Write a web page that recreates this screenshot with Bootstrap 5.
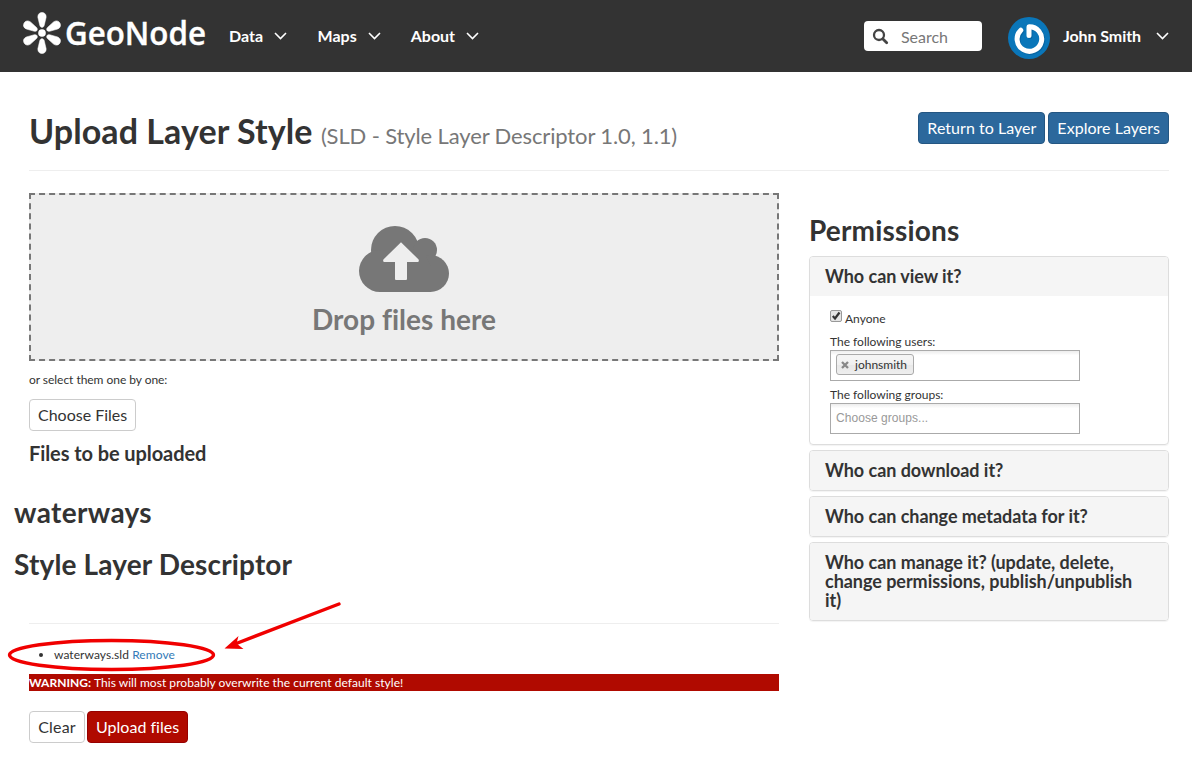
<!DOCTYPE html>
<html lang="en">
<head>
<meta charset="utf-8">
<meta name="viewport" content="width=device-width, initial-scale=1">
<title>Upload Layer Style - GeoNode</title>
<link href="https://cdn.jsdelivr.net/npm/bootstrap@5.3.0/dist/css/bootstrap.min.css" rel="stylesheet">
<style>
body{font-family:Lato,"Liberation Sans",sans-serif;font-size:12px;line-height:17px;color:#333;background:#fff;overflow:hidden}
h1,h2,h3,h4,h5{font-weight:700;color:#333;margin:0}
.topbar{background:#333;height:72px;padding:0 23px 0 22px}
.topbar .nav-link{color:#fff;font-weight:700;font-size:16px;line-height:20px;padding:0}
.menu-data{margin-left:17px}
.menu-maps{margin-left:30.5px}
.menu-about{margin-left:30px}
.chev{width:13px;height:8px;margin-left:11px;flex:none}
.user-name{letter-spacing:-.07px;margin-left:11px}
.search-box{width:118px;height:30px;background:#fff;border-radius:4px;padding-left:8px}
.search-box input{border:0;outline:0;background:none;width:74px;padding:1px 0 0;margin-left:12px;font-size:16px;line-height:20px}
.search-box input::placeholder{color:#777;opacity:1}
.page{width:1170px;margin-left:14px;padding:0 15px}
.page-head{height:99px;border-bottom:1px solid #eee;padding-top:40px}
.page-head h1{font-size:34px;line-height:40px;letter-spacing:.08px;margin-top:-1px}
.page-head h1 span{font-size:22px;font-weight:400;color:#777;letter-spacing:-.13px}
.btn{font-size:16px;line-height:22px;padding:4px 8px;border-radius:4px;white-space:nowrap}
.btn-blue,.btn-blue:hover{background:#2c689c;border-color:#245682;color:#fff;letter-spacing:.03px}
.btn-white{background:#fff;border-color:#ccc;color:#333}
.btn-red{background:#b00a00;border-color:#970000;color:#fff;letter-spacing:.02px}
.row.main{--bs-gutter-x:30px;padding-top:22px}
.dropzone{height:168px;background:#eee;border:2px dashed #777;padding-top:31px}
.dropzone h2{font-size:28px;line-height:34px;color:#777;margin-top:10px;letter-spacing:.03px}
.section-title{font-size:20px;line-height:24px;letter-spacing:-.08px}
.big{font-size:28px;line-height:34px;margin-left:-15px;letter-spacing:.15px}
.big.name{letter-spacing:.35px}
.perm-title{font-size:28px;line-height:34px;letter-spacing:.18px;margin-top:20px;margin-bottom:9px}
.rule{height:1px;background:#eee}
.file-list{padding-left:25px;margin:0;letter-spacing:.06px}
.file-list a{color:#337ab7;text-decoration:none}
.warning{background:#b00a00;color:#fff;height:17px;letter-spacing:.035px}
.marker{left:-22px;top:-54px;pointer-events:none}
.panel{border:1px solid #ddd;border-radius:4px;box-shadow:0 1px 1px rgba(0,0,0,.05);overflow:hidden}
.panel-head{background:#f5f5f5;padding:10px 25px 10px 15px}
.panel-head h4{font-size:18px;line-height:19px;letter-spacing:-.04px}
.panel-content{padding:14px 20px 10px;height:148px}
.pick{width:250px;height:31px;border:1px solid #aaa;background:linear-gradient(#eee 1%,#fff 15%);padding:3px 5px}
.token{height:21px;border:1px solid #aaa;border-radius:3px;background:linear-gradient(#f4f4f4 20%,#f0f0f0 50%,#e8e8e8 52%,#eee);padding:0 5px 0 4px;line-height:19px;width:78px}
.placeholder-text{font-family:"Liberation Sans",sans-serif;color:#999;line-height:23px;letter-spacing:.05px}
.check{width:12px;height:12px}
</style>
</head>
<body>
<header class="topbar d-flex align-items-center">
  <svg width="190" height="60" viewBox="0 -6 190 60" role="img" aria-label="GeoNode">
    <g fill="#fff" transform="translate(20 21)">
      <path id="petal" d="M-2.2-7.500L-4.100-15.500C-4.900-22.200 4.900-22.200 4.100-15.500L2.200-7.500C1.400-5-1.400-5-2.200-7.500Z" stroke="#fff" stroke-width=".5"/>
      <use href="#petal" transform="rotate(61)"/><use href="#petal" transform="rotate(119)"/><use href="#petal" transform="rotate(180)"/><use href="#petal" transform="rotate(241)"/><use href="#petal" transform="rotate(299)"/>
      <circle r="3.800"/>
    </g>
    <text x="43" y="33" fill="#fff" stroke="#fff" stroke-width=".35" font-family="Open Sans, Noto Sans, sans-serif" font-size="32" font-weight="600" textLength="141" lengthAdjust="spacingAndGlyphs">GeoNode</text>
  </svg>
  <nav class="nav flex-nowrap">
    <a class="nav-link menu-data d-flex align-items-center" href="#">Data<svg class="chev" viewBox="0 0 13 8"><path d="M1 1l5.5 5.5L12 1" fill="none" stroke="#fff" stroke-width="1.6"/></svg></a>
    <a class="nav-link menu-maps d-flex align-items-center" href="#">Maps<svg class="chev" viewBox="0 0 13 8"><path d="M1 1l5.5 5.5L12 1" fill="none" stroke="#fff" stroke-width="1.6"/></svg></a>
    <a class="nav-link menu-about d-flex align-items-center" href="#">About<svg class="chev" viewBox="0 0 13 8"><path d="M1 1l5.5 5.5L12 1" fill="none" stroke="#fff" stroke-width="1.6"/></svg></a>
  </nav>
  <div class="search-box d-flex align-items-center ms-auto">
    <svg width="17" height="17" viewBox="0 0 17 17"><g fill="none" stroke="#444"><circle cx="7" cy="7" r="5" stroke-width="2.3"/><path d="M10.7 10.7l4 4" stroke-width="2.8" stroke-linecap="round"/></g></svg>
    <input type="text" placeholder="Search" aria-label="Search">
  </div>
  <a class="nav-link d-flex align-items-center ms-4" href="#">
    <svg width="46" height="46" viewBox="0 0 46 46"><circle cx="23" cy="25" r="21" fill="#0a76b9"/><g fill="none" stroke-linecap="round" stroke-linejoin="round" stroke-width="5"><path d="M14.800 17.200A12.300 12.300 0 1 0 23 13.700V22.500" stroke="#075a91" opacity=".55" transform="translate(1 1)"/><path d="M14.800 17.200A12.300 12.300 0 1 0 23 13.700V22.500" stroke="#fff"/></g></svg>
    <span class="user-name">John Smith</span><svg class="chev" style="margin-left:15px" viewBox="0 0 13 8"><path d="M1 1l5.5 5.5L12 1" fill="none" stroke="#fff" stroke-width="1.6"/></svg>
  </a>
</header>

<main class="page">
  <div class="page-head d-flex justify-content-between align-items-start">
    <h1>Upload Layer Style <span>(SLD - Style Layer Descriptor 1.0, 1.1)</span></h1>
    <div class="d-flex" style="gap:3px"><a class="btn btn-blue" href="#">Return to Layer</a><a class="btn btn-blue" href="#">Explore Layers</a></div>
  </div>
  <div class="row main">
    <section class="col-8">
      <div class="dropzone text-center">
        <svg class="d-block mx-auto" width="90" height="66" viewBox="0 0 90 66"><g fill="#777"><circle cx="36" cy="24" r="24"/><circle cx="66" cy="24" r="12"/><circle cx="21" cy="45" r="21"/><circle cx="71.5" cy="47.5" r="18.5"/><path d="M21 30h46l5 10v26H21z"/></g><path d="M42 16.2L59.6 33.5Q60.5 36 58.5 36H48V53Q48 54 47 54H37Q36 54 36 53V36H25.500Q23.500 36 24.400 33.500Z" fill="#eee"/></svg>
        <h2>Drop files here</h2>
      </div>
      <p class="mb-0" style="margin-top:10px;letter-spacing:-.04px">or select them one by one:</p>
      <button class="btn btn-white d-block" style="margin-top:11px">Choose Files</button>
      <h4 class="section-title" style="margin-top:10px">Files to be uploaded</h4>
      <h3 class="big name" style="margin-top:30px">waterways</h3>
      <h3 class="big" style="margin-top:18px">Style Layer Descriptor</h3>
      <div class="rule" style="margin-top:42px"></div>
      <div class="position-relative" style="margin-top:22px">
        <ul class="file-list"><li>waterways.sld <a href="#">Remove</a></li></ul>
        <svg class="marker position-absolute" width="350" height="90" viewBox="7 592 350 90"><g fill="none" stroke="#f00000" stroke-width="3.4" stroke-linecap="round"><ellipse cx="111.500" cy="655" rx="102" ry="14.500"/><path d="M339 604L235 644"/></g><path d="M224.500 648.500L238.500 636L236.500 643.500L243.500 649Z" fill="#f00000"/></svg>
      </div>
      <div class="warning" style="margin-top:11px"><strong>WARNING:</strong> This will most probably overwrite the current default style!</div>
      <div class="d-flex" style="gap:2px;margin-top:20px"><button class="btn btn-white" style="letter-spacing:.15px;width:56px">Clear</button><button class="btn btn-red">Upload files</button></div>
    </section>
    <aside class="col-4">
      <h3 class="perm-title">Permissions</h3>
      <div class="d-flex flex-column" style="gap:5px">
        <div class="panel">
          <div class="panel-head"><h4>Who can view it?</h4></div>
          <div class="panel-content">
            <label class="d-flex"><svg class="check" viewBox="0 0 12 12"><rect x=".5" y=".5" width="11" height="11" rx="1.500" fill="#e4e4e4" stroke="#999"/><path d="M2.800 6L5 8.500L9.500 2.500" fill="none" stroke="#333" stroke-width="2.200"/></svg><span style="margin-left:3px">Anyone</span></label>
            <div style="margin-top:6px">The following users:</div>
            <div class="pick d-flex"><span class="token d-flex align-items-center"><svg width="8" height="8" viewBox="0 0 8 8" style="margin-right:6px"><path d="M1 1l6 6M7 1L1 7" stroke="#888" stroke-width="2.300"/></svg>johnsmith</span></div>
            <div style="margin-top:5px">The following groups:</div>
            <div class="pick"><div class="placeholder-text">Choose groups...</div></div>
          </div>
        </div>
        <div class="panel"><div class="panel-head"><h4>Who can download it?</h4></div></div>
        <div class="panel"><div class="panel-head"><h4>Who can change metadata for it?</h4></div></div>
        <div class="panel"><div class="panel-head"><h4>Who can manage it? (update, delete, change permissions, publish/unpublish it)</h4></div></div>
      </div>
    </aside>
  </div>
</main>
<script src="https://cdn.jsdelivr.net/npm/bootstrap@5.3.0/dist/js/bootstrap.bundle.min.js"></script>
</body>
</html>
